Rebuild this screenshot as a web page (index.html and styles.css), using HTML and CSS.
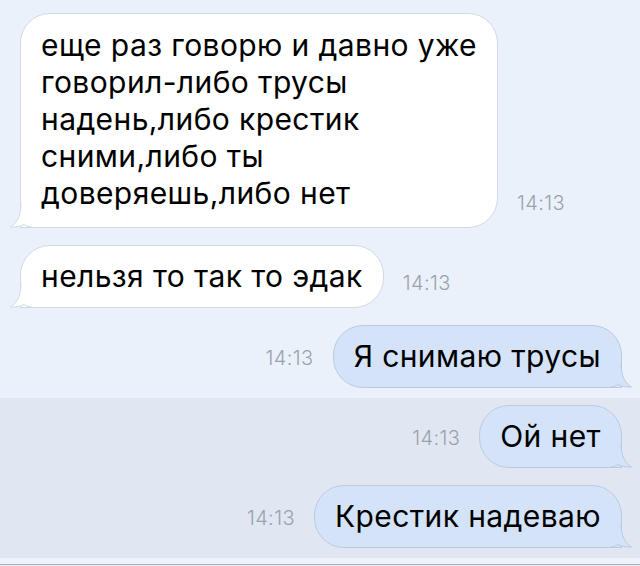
FILE: index.html
```html
<!DOCTYPE html>
<html lang="ru">
<head>
  <meta charset="UTF-8">
  <title>Диалог</title>
  <link rel="stylesheet" href="styles.css">
</head>
<body>
  <div class="chat">
    <div class="row in">
      <div class="bubble long">еще раз говорю и давно уже<br>говорил-либо трусы<br>надень,либо крестик<br>сними,либо ты<br>доверяешь,либо нет
        <svg class="tail" viewBox="0 0 22 25" width="22" height="25"><path class="fill" d="M11 0 C11 13 7 20 0.5 24 C6 24.5 11 23 14 21.5 C17 23.5 19 24 22 24 L22 0 Z"/><path class="line" d="M11 0 C11 13 7 20 0.5 24 C6 24.5 11 23 14 21.5 C17 23.5 19 24 22 24"/></svg>
      </div>
      <span class="time">14:13</span>
    </div>
    <div class="row in">
      <div class="bubble">нельзя то так то эдак
        <svg class="tail" viewBox="0 0 22 25" width="22" height="25"><path class="fill" d="M11 0 C11 13 7 20 0.5 24 C6 24.5 11 23 14 21.5 C17 23.5 19 24 22 24 L22 0 Z"/><path class="line" d="M11 0 C11 13 7 20 0.5 24 C6 24.5 11 23 14 21.5 C17 23.5 19 24 22 24"/></svg>
      </div>
      <span class="time">14:13</span>
    </div>
    <div class="row out">
      <span class="time">14:13</span>
      <div class="bubble">Я снимаю трусы
        <svg class="tail" viewBox="0 0 22 25" width="22" height="25"><path class="fill" d="M11 0 C11 13 7 20 0.5 24 C6 24.5 11 23 14 21.5 C17 23.5 19 24 22 24 L22 0 Z"/><path class="line" d="M11 0 C11 13 7 20 0.5 24 C6 24.5 11 23 14 21.5 C17 23.5 19 24 22 24"/></svg>
      </div>
    </div>
    <div class="selected">
      <div class="row out">
        <span class="time">14:13</span>
        <div class="bubble">Ой нет
          <svg class="tail" viewBox="0 0 22 25" width="22" height="25"><path class="fill" d="M11 0 C11 13 7 20 0.5 24 C6 24.5 11 23 14 21.5 C17 23.5 19 24 22 24 L22 0 Z"/><path class="line" d="M11 0 C11 13 7 20 0.5 24 C6 24.5 11 23 14 21.5 C17 23.5 19 24 22 24"/></svg>
        </div>
      </div>
      <div class="row out">
        <span class="time">14:13</span>
        <div class="bubble">Крестик надеваю
          <svg class="tail" viewBox="0 0 22 25" width="22" height="25"><path class="fill" d="M11 0 C11 13 7 20 0.5 24 C6 24.5 11 23 14 21.5 C17 23.5 19 24 22 24 L22 0 Z"/><path class="line" d="M11 0 C11 13 7 20 0.5 24 C6 24.5 11 23 14 21.5 C17 23.5 19 24 22 24"/></svg>
        </div>
      </div>
    </div>
    <div class="bottom"></div>
  </div>
</body>
</html>
```

FILE: styles.css
```css
body { margin: 0; background: #ebf1fa; font-family: Inter, Roboto, sans-serif; color: #000; }
.chat { padding-top: 6px; }
.row { display: flex; align-items: flex-end; padding: 7px 0 10px; }
.row.in { padding-left: 20px; }
.row.out { justify-content: flex-end; padding-right: 18px; }
.bubble { position: relative; font-size: 30px; letter-spacing: 0.4px; line-height: 37px; padding: 12px 20px; border-radius: 30px; white-space: nowrap; }
.bubble.long { padding: 13px 20px 15px; }
.in .bubble { background: #fff; border: 1px solid #d3d9e2; border-bottom-left-radius: 0; }
.out .bubble { background: #d4e3f8; border: 1px solid #b9cbe3; border-bottom-right-radius: 0; }
.tail { position: absolute; bottom: -1px; }
.in .tail { left: -11px; }
.out .tail { right: -11px; transform: scaleX(-1); }
.tail .fill { stroke: none; }
.tail .line { fill: none; stroke-width: 1; }
.in .tail .fill { fill: #fff; }
.in .tail .line { stroke: #d3d9e2; }
.out .tail .fill { fill: #d4e3f8; }
.out .tail .line { stroke: #b9cbe3; }
.time { font-size: 20px; font-weight: 300; letter-spacing: 0.4px; line-height: 20px; color: #9aa2ad; }
.in .time { margin: 0 0 15px 19px; }
.out .time { margin: 0 19px 20px 0; }
.selected { background: #e1e7f2; }
.bottom { height: 6px; border-bottom: 1px solid #a9aeb6; background: #eef3fa; }
```
